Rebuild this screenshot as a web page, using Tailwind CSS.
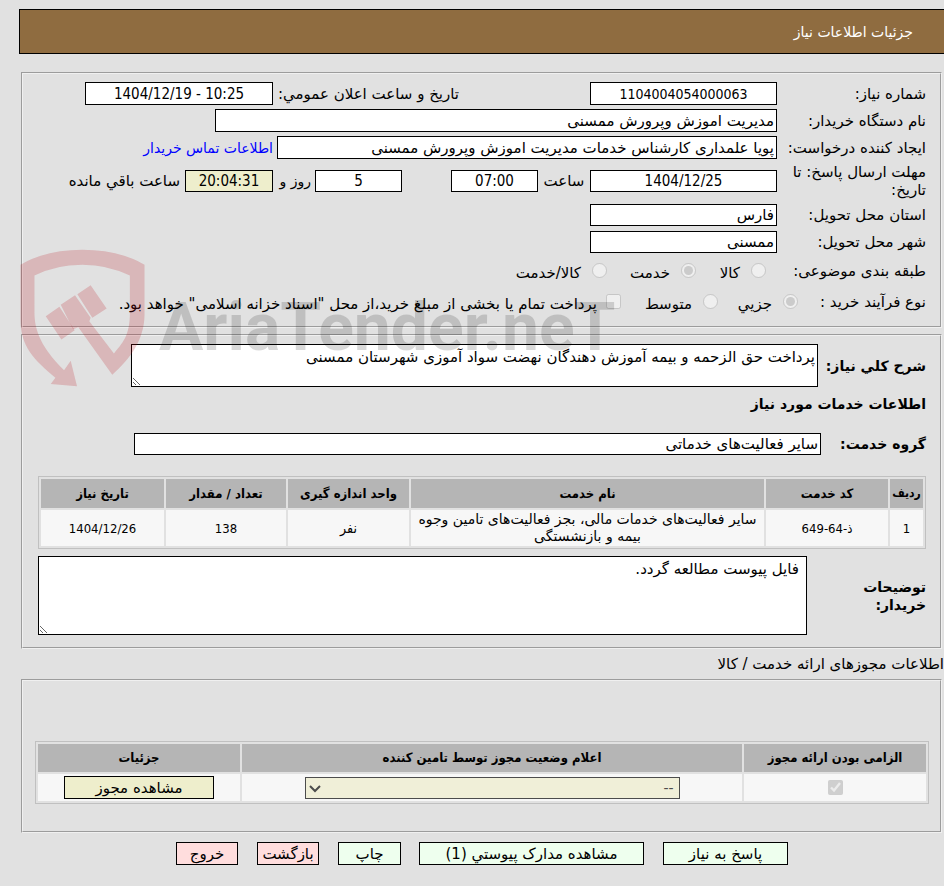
<!DOCTYPE html>
<html lang="fa" dir="rtl">
<head>
    <meta charset="UTF-8">
    <meta name="viewport" content="width=device-width, initial-scale=1.0">
    <title>جزئیات اطلاعات نیاز</title>
    <script src="https://cdn.jsdelivr.net/npm/@tailwindcss/browser@4"></script>
</head>
<body class="bg-[#e1e1e1] text-black font-['DejaVu_Sans',sans-serif] text-[15px] leading-[18px] overflow-x-hidden">
    <div class="relative pl-[19px] pt-[9px] pb-5">
        <!-- header -->
        <header class="bg-[#8f6c40] border border-r-0 border-black h-[45px] pr-[31px] flex items-center">
            <h1 class="text-white text-[14px]">جزئیات اطلاعات نیاز</h1>
        </header>

        <main class="ml-[2px] mt-[18px]">
            <!-- need info -->
            <section class="mr-[2px] border-2 [border-style:groove] border-[#f0f0f0] pt-2 pb-[11px] pr-[14px] flex flex-col gap-1">
                <div class="flex items-center h-[23px]">
                    <label for="num" class="w-[149px]">شماره نیاز:</label>
                    <input id="num" value="1104004054000063" class="w-[187px] h-[23px] bg-white border border-black text-center text-[14px] font-['DejaVu_Sans_Condensed',sans-serif]">
                    <label for="pub" class="mr-[131px] w-[186px] whitespace-nowrap">تاریخ و ساعت اعلان عمومي:</label>
                    <input id="pub" dir="ltr" value="1404/12/19 - 10:25" class="w-[188px] h-[23px] bg-white border border-black text-center text-[15px] font-['DejaVu_Sans_Condensed',sans-serif]">
                </div>
                <div class="flex items-center h-[23px]">
                    <label for="org" class="w-[149px]">نام دستگاه خریدار:</label>
                    <input id="org" value="مدیریت اموزش وپرورش ممسنی" class="w-[562px] h-[23px] bg-white border border-black px-[2px]">
                </div>
                <div class="flex items-center h-[23px]">
                    <label for="creator" class="w-[149px] whitespace-nowrap">ایجاد کننده درخواست:</label>
                    <input id="creator" value="پویا علمداری کارشناس خدمات مدیریت اموزش وپرورش ممسنی" class="w-[500px] h-[23px] bg-white border border-black px-[2px]">
                    <a href="#" class="mr-1 text-[#0000ff] text-[14px]">اطلاعات تماس خریدار</a>
                </div>
                <div class="flex items-center h-[36px]">
                    <label for="deadline" class="w-[149px] pl-[10px]">مهلت ارسال پاسخ: تا تاریخ:</label>
                    <input id="deadline" dir="ltr" value="1404/12/25" class="w-[187px] h-[22px] bg-white border border-black text-center text-[15px] font-['DejaVu_Sans_Condensed',sans-serif]">
                    <label for="hour" class="w-[52px] text-center">ساعت</label>
                    <input id="hour" value="07:00" class="w-[87px] h-[22px] bg-white border border-black text-center text-[15px] font-['DejaVu_Sans_Condensed',sans-serif]">
                    <input id="days" value="5" class="mr-[49px] w-[87px] h-[22px] bg-white border border-black text-center text-[15px] font-['DejaVu_Sans_Condensed',sans-serif]">
                    <label for="days" class="w-[42px] pr-1 text-[14px] whitespace-nowrap">روز و</label>
                    <input id="remain" value="20:04:31" class="w-[88px] h-[22px] bg-[#eeeecc] border border-black text-center text-[15px] font-['DejaVu_Sans_Condensed',sans-serif]">
                    <label for="remain" class="pr-[5px] whitespace-nowrap">ساعت باقي مانده</label>
                </div>
                <div class="flex items-center h-[23px]">
                    <label for="province" class="w-[149px]">استان محل تحویل:</label>
                    <input id="province" value="فارس" class="w-[187px] h-[22px] bg-white border border-black px-[2px]">
                </div>
                <div class="flex items-center h-[23px]">
                    <label for="city" class="w-[149px]">شهر محل تحویل:</label>
                    <input id="city" value="ممسنی" class="w-[187px] h-[22px] bg-white border border-black px-[2px]">
                </div>
                <div class="flex items-center h-[27px]">
                    <span class="w-[160px]">طبقه بندی موضوعی:</span>
                    <input type="radio" name="subject" id="goods" disabled class="size-[15px]">
                    <label for="goods" class="w-[55px] pr-[11px] pt-1">كالا</label>
                    <input type="radio" name="subject" id="service" checked disabled class="size-[15px]">
                    <label for="service" class="w-[74px] pr-[11px] pt-1">خدمت</label>
                    <input type="radio" name="subject" id="both" disabled class="size-[15px]">
                    <label for="both" class="pr-[11px] pt-1">كالا/خدمت</label>
                </div>
                <div class="flex items-center h-[27px]">
                    <span class="w-[128px]">نوع فرآیند خرید :</span>
                    <input type="radio" name="process" id="small" checked disabled class="size-[15px]">
                    <label for="small" class="w-[65px] pr-[11px] pt-1">جزیي</label>
                    <input type="radio" name="process" id="medium" disabled class="size-[15px]">
                    <label for="medium" class="w-[82px] pr-[11px] pt-1">متوسط</label>
                    <input type="checkbox" id="treasury" disabled class="size-[15px]">
                    <label for="treasury" class="pr-[9px] pt-1 whitespace-nowrap">پرداخت تمام یا بخشی از مبلغ خرید،از محل "اسناد خزانه اسلامی" خواهد بود.</label>
                </div>
            </section>

            <!-- services -->
            <section class="mr-[2px] mt-[6px] border-2 [border-style:groove] border-[#f0f0f0] pt-2 pb-3 pr-[14px] pl-[15px]">
                <div class="flex items-center">
                    <label for="desc" class="w-[108px] font-bold text-[14px] whitespace-nowrap">شرح کلي نیاز:</label>
                    <textarea id="desc" class="flex-1 ml-[93px] h-[43px] bg-white border border-black px-[2px] pt-[3px] resize">پرداخت حق الزحمه و بیمه آموزش دهندگان نهضت سواد آموزی شهرستان ممسنی</textarea>
                </div>
                <h2 class="mt-2 font-bold text-[14px]">اطلاعات خدمات مورد نیاز</h2>
                <div class="flex items-center mt-5">
                    <label for="group" class="w-[105px] font-bold text-[14px]">گروه خدمت:</label>
                    <input id="group" value="سایر فعالیت‌های خدماتی" class="flex-1 ml-[96px] h-[22px] bg-white border border-black px-[2px]">
                </div>
                <table class="w-full mt-[21px] border border-[#c0c0c0] border-separate border-spacing-[2px] table-fixed text-[13px] leading-[17px] text-center font-['DejaVu_Sans_Condensed',sans-serif]">
                    <thead>
                        <tr class="bg-[#b5b5b5] h-[29px]">
                            <th class="w-[33px] text-[12px]">ردیف</th>
                            <th class="w-[122px]">کد خدمت</th>
                            <th>نام خدمت</th>
                            <th class="w-[121px]">واحد اندازه گیری</th>
                            <th class="w-[120px]">تعداد / مقدار</th>
                            <th class="w-[123px]">تاریخ نیاز</th>
                        </tr>
                    </thead>
                    <tbody>
                        <tr class="bg-[#f7f7f7] h-[36px]">
                            <td>1</td>
                            <td>ذ-64-649</td>
                            <td class="text-[14px] font-['DejaVu_Sans',sans-serif]">سایر فعالیت‌های خدمات مالی، بجز فعالیت‌های تامین وجوه بیمه و بازنشستگی</td>
                            <td class="text-[14px]">نفر</td>
                            <td>138</td>
                            <td>1404/12/26</td>
                        </tr>
                    </tbody>
                </table>
                <div class="flex items-center mt-[7px]">
                    <label for="notes" class="w-[119px] pl-10 font-bold text-[14px]">توضیحات خریدار:</label>
                    <textarea id="notes" class="flex-1 h-[79px] bg-white border border-black px-[7px] pt-[3px] resize">فایل پیوست مطالعه گردد.</textarea>
                </div>
            </section>

            <h2 class="py-[6px]">اطلاعات مجوزهای ارائه خدمت / کالا</h2>

            <!-- permits -->
            <section class="mr-[2px] border-2 [border-style:groove] border-[#f0f0f0] pt-[60px] pb-[27px] pr-[11px] pl-3">
                <table class="w-full border border-[#c0c0c0] border-separate border-spacing-[2px] table-fixed text-center">
                    <thead>
                        <tr class="bg-[#b5b5b5] h-[28px] text-[13px] font-['DejaVu_Sans_Condensed',sans-serif]">
                            <th class="w-[182px]">الزامی بودن ارائه مجوز</th>
                            <th>اعلام وضعیت مجوز توسط تامین کننده</th>
                            <th class="w-[202px]">جزئیات</th>
                        </tr>
                    </thead>
                    <tbody>
                        <tr class="bg-[#f7f7f7] h-[27px]">
                            <td><input type="checkbox" aria-label="الزامی بودن ارائه مجوز" checked disabled class="block mx-auto size-[15px]"></td>
                            <td>
                                <div class="relative w-[375px] mx-auto">
                                    <select aria-label="اعلام وضعیت مجوز توسط تامین کننده" disabled class="block w-full h-[22px] appearance-none bg-[#f0efd8] border border-[#4c4c4c] text-[#4c4c4c] pr-[5px] text-[14px]">
                                        <option>--</option>
                                    </select>
                                    <svg class="absolute left-1 top-2 w-3 h-2 pointer-events-none" viewBox="0 0 12 8" fill="none" stroke="#4c4c4c" stroke-width="2"><path d="M1 1l5 5 5-5"/></svg>
                                </div>
                            </td>
                            <td><button class="block mx-auto w-[150px] h-[23px] bg-[#eeeecc] border border-black">مشاهده مجوز</button></td>
                        </tr>
                    </tbody>
                </table>
            </section>

            <!-- actions -->
            <div class="mt-[9px] pr-[156px] flex">
                <button class="w-[125px] h-[23px] bg-[#eeffee] border border-black ml-[19px]">پاسخ به نیاز</button>
                <button class="w-[225px] h-[23px] bg-[#eeffee] border border-black ml-[18px]">مشاهده مدارک پیوستي (1)</button>
                <button class="w-[63px] h-[23px] bg-[#eeffee] border border-black ml-[19px]">چاپ</button>
                <button class="w-[62px] h-[23px] bg-[#ffdddd] border border-black ml-[19px] whitespace-nowrap">بازگشت</button>
                <button class="w-[62px] h-[23px] bg-[#ffdddd] border border-black">خروج</button>
            </div>
        </main>

        <!-- watermark -->
        <div dir="ltr" class="absolute left-5 top-[249px] flex pointer-events-none">
            <svg class="w-[125px] h-[138px] shrink-0" viewBox="60 178 375 415" fill="#b90d1a" fill-opacity="0.2">
                <path fill-rule="evenodd" d="M61 225Q140 180 247 180Q355 180 434 225V375C434 450 390 510 337 556L235 413L219 419L182 346L225 317L272 385L268 395L342 492C375 455 390 430 390 370V258Q325 225 247 225Q165 225 103 258V370C103 440 140 490 192 543L212 514L231 591L152 584L166 565C100 510 61 470 61 390Z"/>
                <path d="M137 380L178 352L224 422L184 450ZM232 314L272 287L320 357L277 385Z"/>
            </svg>
            <span class="ml-[14px] mt-[36px] text-[66px] leading-[86px] font-bold text-black/15 font-['Roboto',sans-serif]">AriaTender.neT</span>
        </div>
    </div>
</body>
</html>
